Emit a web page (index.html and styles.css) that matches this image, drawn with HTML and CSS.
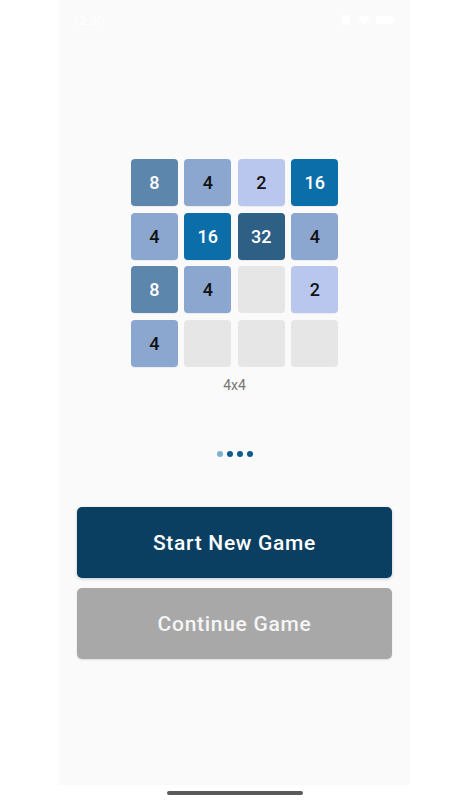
FILE: index.html
```html
<!DOCTYPE html>
<html>
<head>
<meta charset="utf-8">
<link rel="stylesheet" href="styles.css">
</head>
<body>
<div class="panel">
  <div class="status">
    <span class="time">12:00</span>
    <span class="icons">
      <svg width="12" height="12" viewBox="0 0 12 12"><rect x="2" y="1" width="8" height="10" rx="1" fill="#fff"/></svg>
      <svg width="14" height="12" viewBox="0 0 14 12"><path d="M1 4a9 9 0 0 1 12 0L7 11z" fill="#fff"/></svg>
      <svg width="20" height="10" viewBox="0 0 20 10"><rect x="0" y="1" width="17" height="8" rx="2" fill="#fff"/><rect x="17.5" y="3.5" width="2" height="3" fill="#fff"/></svg>
    </span>
  </div>

  <div class="board">
    <div class="tile t8">8</div>
    <div class="tile t4">4</div>
    <div class="tile t2">2</div>
    <div class="tile t16">16</div>

    <div class="tile t4">4</div>
    <div class="tile t16">16</div>
    <div class="tile t32">32</div>
    <div class="tile t4">4</div>

    <div class="tile t8">8</div>
    <div class="tile t4">4</div>
    <div class="tile empty"></div>
    <div class="tile t2">2</div>

    <div class="tile t4">4</div>
    <div class="tile empty"></div>
    <div class="tile empty"></div>
    <div class="tile empty"></div>
  </div>
  <div class="size-label">4x4</div>

  <div class="dots">
    <span class="dot active"></span>
    <span class="dot"></span>
    <span class="dot"></span>
    <span class="dot"></span>
  </div>

  <div class="buttons">
    <button class="btn btn-primary">Start New Game</button>
    <button class="btn btn-disabled">Continue Game</button>
  </div>
</div>
<div class="nav">
  <div class="home-bar"></div>
</div>
</body>
</html>
```

FILE: styles.css
```css
html, body {
  margin: 0;
  padding: 0;
  background: #ffffff;
  font-family: Roboto, "Noto Sans", sans-serif;
}

.panel {
  width: 351px;
  height: 785px;
  margin-left: 59px;
  background: #fafafa;
  display: flex;
  flex-direction: column;
  align-items: center;
}

.status {
  align-self: stretch;
  height: 40px;
  display: flex;
  justify-content: space-between;
  align-items: center;
  padding: 0 14px 0 13px;
  color: #ffffff;
  font-size: 13px;
}

.status .icons {
  display: flex;
  gap: 5px;
  align-items: center;
}

.board {
  margin-top: 119px;
  display: grid;
  grid-template-columns: repeat(4, 47px);
  grid-auto-rows: 47px;
  gap: 6.5px;
}

.tile {
  border-radius: 4px;
  display: flex;
  align-items: center;
  justify-content: center;
  font-size: 18px;
  font-weight: 500;
  color: #111827;
  box-shadow: 0 1px 1px rgba(0, 0, 0, 0.06);
}

.t2 { background: #b9c7ef; color: #111; }
.t4 { background: #8ba6cf; color: #111; }
.t8 { background: #5d86ad; color: #fff; }
.t16 { background: #0b6ea9; color: #fff; }
.t32 { background: #2e5f84; color: #fff; }
.empty { background: #e6e6e6; box-shadow: none; }

.size-label {
  margin-top: 10px;
  font-size: 14px;
  line-height: 16px;
  color: #777777;
}

.dots {
  margin-top: 58px;
  display: flex;
  gap: 4px;
}

.dot {
  width: 6px;
  height: 6px;
  border-radius: 50%;
  background: #0d5c8c;
}

.dot.active {
  background: #7fb3d4;
}

.buttons {
  margin-top: 50px;
  align-self: stretch;
  padding: 0 18px;
  display: flex;
  flex-direction: column;
  gap: 10px;
}

.btn {
  height: 71px;
  padding-top: 3px;
  border: none;
  border-radius: 5px;
  font-family: Roboto, "Noto Sans", sans-serif;
  font-size: 21px;
  font-weight: 500;
  letter-spacing: 0.7px;
  color: #ffffff;
}

.btn-primary {
  background: #0b3f62;
  box-shadow: 0 1px 3px rgba(40, 80, 120, 0.3);
}

.btn-disabled {
  background: #a8a8a8;
  color: #f5f5f5;
  box-shadow: 0 1px 2px rgba(0, 0, 0, 0.12);
}

.nav {
  height: 15px;
  display: flex;
  justify-content: center;
  padding-top: 6px;
}

.home-bar {
  width: 136px;
  height: 3.5px;
  border-radius: 2px;
  background: #5a5a5a;
}
```
